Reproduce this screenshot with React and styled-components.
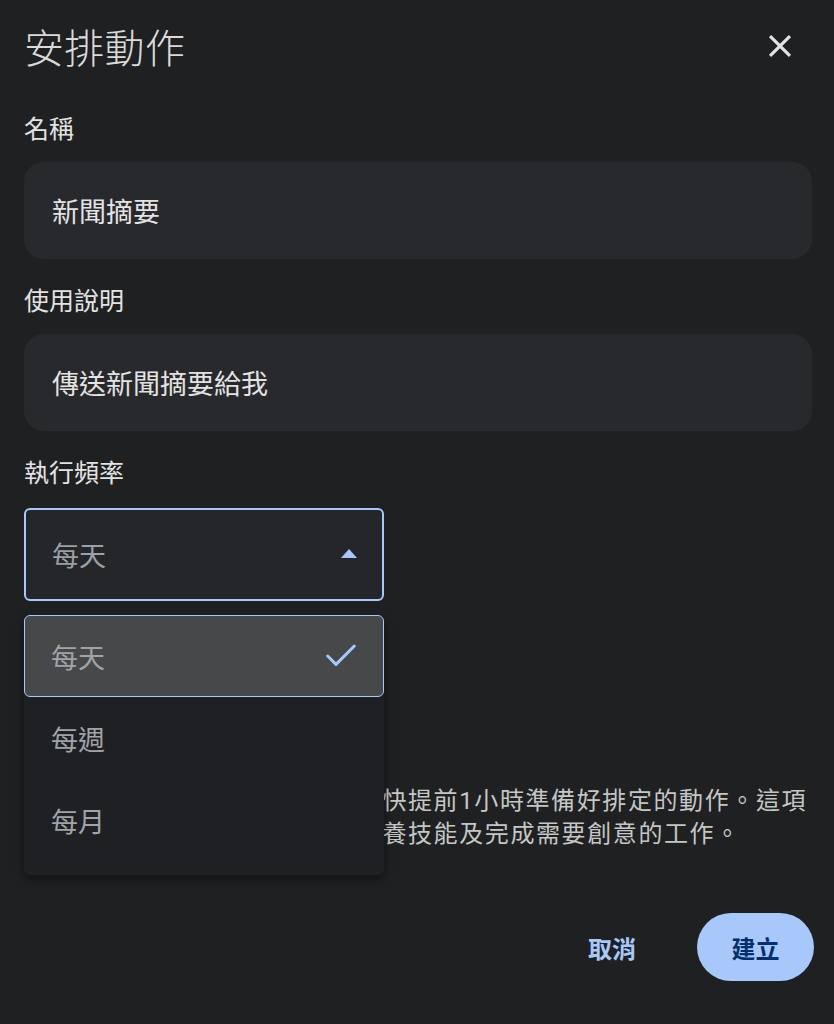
import React from "react";
import styled, { createGlobalStyle } from "styled-components";
import { Check } from "lucide-react";

const GlobalStyle = createGlobalStyle`
  html, body {
    margin: 0;
    padding: 0;
    background: #1f2022;
  }
  body {
    font-family: Roboto, "Noto Sans CJK TC", "Noto Sans", sans-serif;
    color: #e3e3e3;
    -webkit-font-smoothing: antialiased;
  }
  * { box-sizing: border-box; }
`;

const Page = styled.div`
  width: 834px;
  height: 1024px;
  overflow: hidden;
  padding: 0 22px 0 24px;
  background: #1f2022;
`;

const Header = styled.div`
  height: 92px;
  display: flex;
  align-items: center;
  justify-content: space-between;
`;

const Title = styled.h1`
  margin: 0;
  font-size: 40px;
  font-weight: 300;
  color: #dadada;
  letter-spacing: 0.3px;
`;

const CloseButton = styled.button`
  width: 40px;
  height: 40px;
  margin-right: 12px;
  padding: 0;
  border: none;
  background: none;
  color: #e3e3e3;
  display: flex;
  align-items: center;
  justify-content: center;
`;

const Field = styled.div`
  margin-top: ${(p) => p.$top || 26}px;
  position: relative;
`;

const Label = styled.div`
  font-size: 25px;
  line-height: 34px;
  color: #e3e3e3;
  margin-bottom: ${(p) => p.$gap || 15}px;
`;

const TextBox = styled.div`
  height: 97px;
  border-radius: 20px;
  background: #28292c;
  padding: 0 28px;
  display: flex;
  align-items: center;
  font-size: 27px;
  color: #e3e3e3;
`;

const SelectWrap = styled.div`
  position: relative;
`;

const Select = styled.div`
  width: 360px;
  height: 93px;
  border: 2px solid ${(p) => (p.$open ? "#a8c7fa" : "#5f6368")};
  border-radius: 6px;
  background: #252629;
  padding: 0 25px 0 26px;
  display: flex;
  align-items: center;
  justify-content: space-between;
  font-size: 27px;
  color: #9aa0a6;
`;

const Caret = styled.span`
  width: 0;
  height: 0;
  border-left: 8px solid transparent;
  border-right: 8px solid transparent;
  border-bottom: 9px solid #a8c7fa;
  margin-top: -2px;
`;

const Menu = styled.ul`
  position: absolute;
  left: 0;
  top: calc(100% + 14px);
  width: 360px;
  margin: 0;
  padding: 0 0 14px;
  list-style: none;
  background: #1f2023;
  border-radius: 6px;
  box-shadow: 0 4px 10px rgba(0, 0, 0, 0.45);
  z-index: 10;
`;

const Option = styled.li`
  height: 82px;
  padding: 0 22px 0 26px;
  display: flex;
  align-items: center;
  justify-content: space-between;
  font-size: 27px;
  color: #a0a4a9;
  background: ${(p) => (p.$selected ? "#47484a" : "transparent")};
  border: 1.5px solid ${(p) => (p.$selected ? "#a8c7fa" : "transparent")};
  border-radius: 6px;
`;

const Note = styled.p`
  margin: 67px 0 0;
  font-size: 24px;
  line-height: 33px;
  letter-spacing: 1.6px;
  color: #c4c7c5;
  white-space: nowrap;
`;

const Actions = styled.div`
  margin-top: 62px;
  margin-right: -2px;
  display: flex;
  justify-content: flex-end;
  align-items: center;
  gap: 61px;
`;

const TextButton = styled.button`
  border: none;
  background: none;
  padding: 0;
  font-family: inherit;
  font-size: 24px;
  font-weight: 700;
  color: #a8c7fa;
`;

const FilledButton = styled.button`
  width: 117px;
  height: 68px;
  border: none;
  border-radius: 34px;
  background: #a8c7fa;
  font-family: inherit;
  font-size: 24px;
  font-weight: 700;
  color: #062e6f;
`;

const options = ["每天", "每週", "每月"];

export default function App() {
  return (
    <>
      <GlobalStyle />
      <Page>
        <Header>
          <Title>安排動作</Title>
          <CloseButton aria-label="關閉">
            <svg width="38" height="38" viewBox="0 0 24 24" fill="currentColor">
              <path d="M19 6.41L17.59 5 12 10.59 6.41 5 5 6.41 10.59 12 5 17.59 6.41 19 12 13.41 17.59 19 19 17.59 13.41 12z" />
            </svg>
          </CloseButton>
        </Header>

        <Field $top={21}>
          <Label>名稱</Label>
          <TextBox>新聞摘要</TextBox>
        </Field>

        <Field>
          <Label>使用說明</Label>
          <TextBox>傳送新聞摘要給我</TextBox>
        </Field>

        <Field>
          <Label $gap={17}>執行頻率</Label>
          <SelectWrap>
            <Select $open>
              每天
              <Caret />
            </Select>
            <Menu>
              {options.map((o, i) => (
                <Option key={o} $selected={i === 0}>
                  {o}
                  {i === 0 && <Check size={40} strokeWidth={1.8} color="#a8c7fa" />}
                </Option>
              ))}
            </Menu>
          </SelectWrap>
        </Field>

        <Field $top={24}>
          <Select>上午 8:00</Select>
        </Field>

        <Note>
          系統會在你指定的執行時間前盡快提前1小時準備好排定的動作。這項
          <br />
          功能可協助你妥善規劃時間、培養技能及完成需要創意的工作。
        </Note>

        <Actions>
          <TextButton>取消</TextButton>
          <FilledButton>建立</FilledButton>
        </Actions>
      </Page>
    </>
  );
}
